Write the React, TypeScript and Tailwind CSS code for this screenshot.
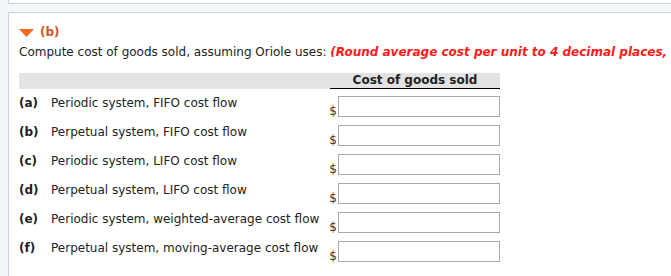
import React from 'react';

// Cost of goods sold question panel, part (b)

interface Row {
  letter: string;
  label: string;
}

const ROWS: Row[] = [
  { letter: '(a)', label: 'Periodic system, FIFO cost flow' },
  { letter: '(b)', label: 'Perpetual system, FIFO cost flow' },
  { letter: '(c)', label: 'Periodic system, LIFO cost flow' },
  { letter: '(d)', label: 'Perpetual system, LIFO cost flow' },
  { letter: '(e)', label: 'Periodic system, weighted-average cost flow' },
  { letter: '(f)', label: 'Perpetual system, moving-average cost flow' },
];

export default function App() {
  return (
    <div className="w-[671px] h-[276px] overflow-hidden bg-[#f3f6f9] font-['DejaVu_Sans',Verdana,sans-serif] text-[12px] text-[#222]">
      {/* tail of the previous panel */}
      <div className="ml-[8px] h-[4px] bg-white border-l border-b border-[#c9d2dc]" />

      <div className="ml-[8px] mt-[8px] h-[300px] bg-white border-l border-t border-[#c9d2dc] pl-[10px] pt-[11px]">
        <div className="flex items-center gap-[6px] h-[17px]">
          <svg width="15" height="8" viewBox="0 0 15 8" aria-hidden="true">
            <polygon points="0,0 15,0 7.5,8" fill="#f26a1b" />
          </svg>
          <span className="font-bold text-[#d2561d] leading-[15px]">(b)</span>
        </div>

        <p className="mt-[4px] leading-[15px] whitespace-nowrap">
          Compute cost of goods sold, assuming Oriole uses:{' '}
          <span className="font-bold italic text-[#ff1a1a]">
            (Round average cost per unit to 4 decimal places,
          </span>
        </p>

        {/* table */}
        <div className="mt-[13px] w-[481px]">
          <div className="flex h-[16px] bg-[#e3e3e3]">
            <div className="w-[311px]" />
            <div className="w-[170px] border-b border-black text-center font-bold leading-[15px]">
              Cost of goods sold
            </div>
          </div>

          {ROWS.map((row) => (
            <div key={row.letter} className="flex h-[29px]">
              <div className="w-[311px] flex pt-[7px] leading-[15px] whitespace-nowrap">
                <span className="w-[32px] font-bold">{row.letter}</span>
                <span>{row.label}</span>
              </div>
              <div className="w-[9px] self-end leading-[15px] mb-[-1px] text-[#333]">$</div>
              <div className="mt-[7px] w-[162px] h-[21px] border border-[#a9a9a9] bg-white" />
            </div>
          ))}
        </div>
      </div>
    </div>
  );
}
